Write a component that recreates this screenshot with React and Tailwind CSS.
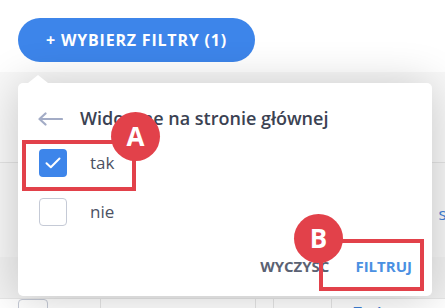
import React from "react";

function CheckBox({ checked }) {
	return checked ? (
		<span className="flex h-[28px] w-[28px] shrink-0 items-center justify-center rounded-[4px] bg-[#3d85ea]">
			<svg width="16" height="12" viewBox="0 0 16 12" fill="none">
				<path d="M1.5 6.2 L5.8 10.2 L14.5 1.5" stroke="white" strokeWidth="2" strokeLinecap="round" strokeLinejoin="round" />
			</svg>
		</span>
	) : (
		<span className="block h-[28px] w-[28px] shrink-0 rounded-[4px] border-[1.5px] border-[#c5cad6] bg-white" />
	);
}

function Badge({ letter, className }) {
	return (
		<div className={"absolute flex h-[49px] w-[49px] items-center justify-center rounded-full bg-[#e2414a] text-[26px] font-bold text-white " + className}>
			{letter}
		</div>
	);
}

export default function App() {
	return (
		<div className="relative h-[308px] w-[445px] overflow-hidden bg-white font-['Open_Sans',sans-serif]">
			{/* page under the popup */}
			<div className="flex h-[163px] flex-col border-b border-[#e3e3e3] bg-[#f8f8f8]">
				<div className="h-[72px] bg-white" />
			</div>
			<div className="relative h-[94px] bg-[#f6f6f6]">
				<span className="absolute right-[-6px] top-[38px] text-[17px] text-[#3d7fd6]">si</span>
			</div>
			<div className="h-[42px] border-b border-[#e6e6e6] bg-[#f1f1f1]" />
			<div className="flex h-[20px] items-start bg-white">
				<div className="ml-[18px] h-[28px] w-[30px] rounded-[4px] border border-[#c5cad6]" />
				<div className="ml-[52px] h-full border-l border-[#e6e6e6]" />
				<div className="ml-[154px] h-full border-l border-[#e6e6e6]" />
				<div className="ml-[17px] h-full border-l border-[#e6e6e6]" />
				<div className="ml-[57px] h-full border-l border-[#e6e6e6]" />
				<span className="ml-[21px] mt-[2px] text-[16px] font-semibold text-[#3d7fd6]">Zadat</span>
			</div>

			{/* filter button */}
			<button className="absolute left-[18px] top-[18px] flex h-[44px] w-[237px] items-center justify-center rounded-full bg-[#3d85ea] text-[16px] font-bold tracking-[0.05em] text-white">
				+ WYBIERZ FILTRY (1)
			</button>

			{/* popup */}
			<div className="absolute left-[18px] top-[83px] h-[213px] w-[414px] rounded-[5px] bg-white shadow-[0_2px_45px_rgba(0,0,0,0.2)]">
				<div className="absolute left-[10px] top-[-8px] h-0 w-0 border-x-[10px] border-b-[8px] border-x-transparent border-b-white" />
				<div className="flex items-center pl-[20px] pt-[22px]">
					<svg width="25" height="14" viewBox="0 0 25 14" fill="none">
						<path d="M24 7 H2 M7.5 1.5 L1.5 7 L7.5 12.5" stroke="#a3acc6" strokeWidth="2.2" strokeLinecap="round" strokeLinejoin="round" />
					</svg>
					<span className="ml-[17px] text-[18px] font-semibold text-[#3b4252]">Widoczne na stronie głównej</span>
				</div>
				<div className="mt-[17px] flex flex-col gap-[21px] pl-[21px]">
					<label className="flex items-center">
						<CheckBox checked />
						<span className="ml-[23px] text-[17px] text-[#4c5263]">tak</span>
					</label>
					<label className="flex items-center">
						<CheckBox />
						<span className="ml-[23px] text-[17px] text-[#4c5263]">nie</span>
					</label>
				</div>
				<div className="mt-[29px] flex justify-end gap-[26px] pr-[20px]">
					<span className="text-[15px] font-bold text-[#5b6273]">WYCZYŚĆ</span>
					<span className="text-[15px] font-bold text-[#4a90e2]">FILTRUJ</span>
				</div>
			</div>

			{/* annotations */}
			<div className="absolute left-[22px] top-[140px] h-[51px] w-[114px] border-[4px] border-[#e2414a]" />
			<Badge letter="A" className="left-[111px] top-[112px]" />
			<div className="absolute left-[319px] top-[239px] h-[52px] w-[105px] border-[4px] border-[#e2414a]" />
			<Badge letter="B" className="left-[294px] top-[214px]" />
		</div>
	);
}
